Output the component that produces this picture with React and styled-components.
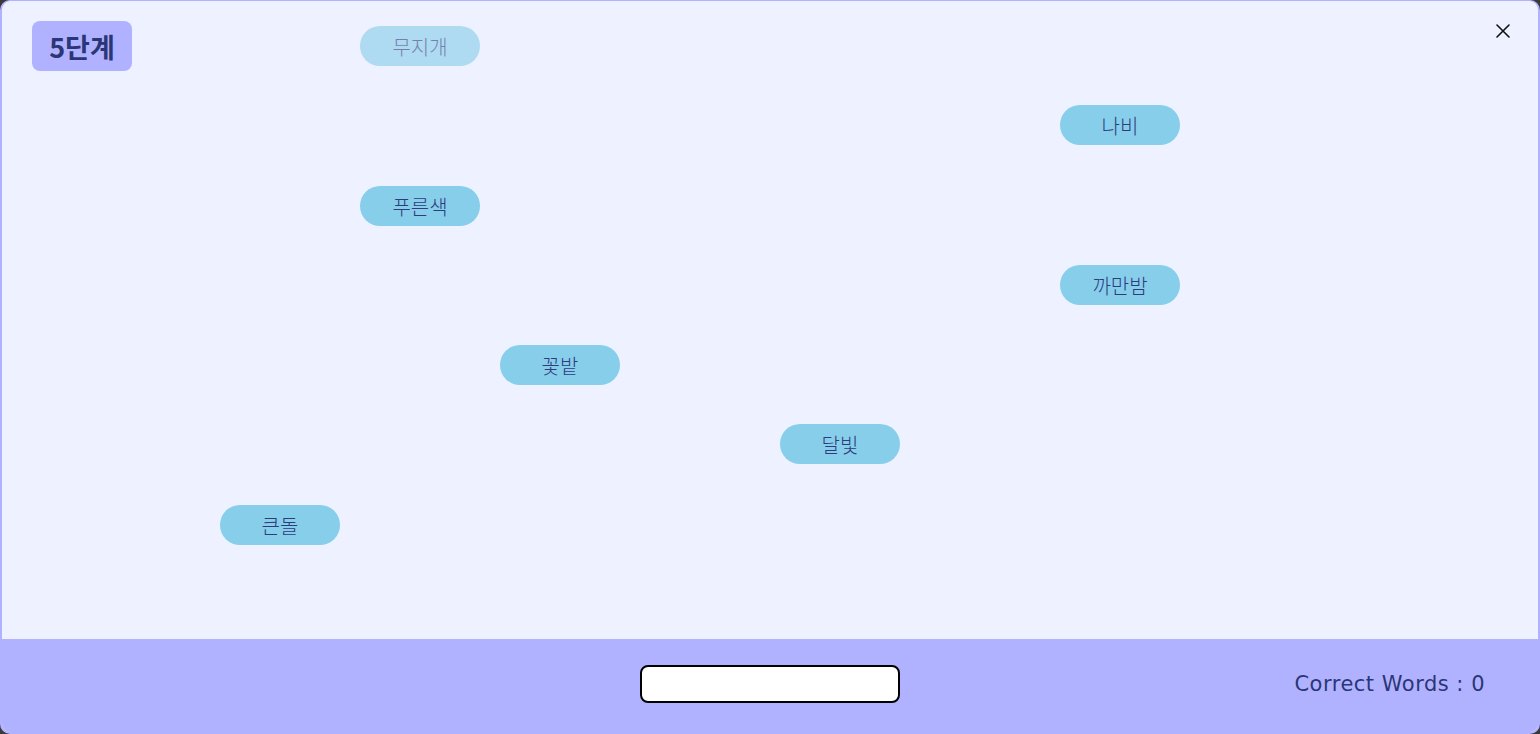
import React, { useState } from "react";
import styled, { createGlobalStyle } from "styled-components";

const words = [
  { text: "무지개", x: 358, y: 25, fading: true },
  { text: "나비", x: 1058, y: 104 },
  { text: "푸른색", x: 358, y: 185 },
  { text: "까만밤", x: 1058, y: 264 },
  { text: "꽃밭", x: 498, y: 344 },
  { text: "달빛", x: 778, y: 423 },
  { text: "큰돌", x: 218, y: 504 },
];

export default function App() {
  const [typed, setTyped] = useState("");
  const [correct] = useState(0);

  return (
    <>
      <GlobalStyle />
      <Modal>
        <Board>
          <Level>5단계</Level>
          <CloseButton type="button" aria-label="닫기">
            <svg width="14" height="14" viewBox="0 0 14 14">
              <path
                d="M1 1 L13 13 M13 1 L1 13"
                stroke="#111"
                strokeWidth="1.6"
                strokeLinecap="round"
              />
            </svg>
          </CloseButton>
          {words.map((word) => (
            <Word
              key={word.text}
              $fading={word.fading}
              style={{ left: word.x, top: word.y }}
            >
              {word.text}
            </Word>
          ))}
        </Board>
        <Footer>
          <Spacer />
          <TypeInput
            value={typed}
            onChange={(e) => setTyped(e.target.value)}
          />
          <Score>Correct Words : {correct}</Score>
        </Footer>
      </Modal>
    </>
  );
}

const GlobalStyle = createGlobalStyle`
  html, body {
    margin: 0;
    height: 100%;
    background: #3a3a3a;
  }
  #root {
    height: 100%;
  }
  * {
    box-sizing: border-box;
  }
`;

const Modal = styled.div`
  height: 734px;
  display: flex;
  flex-direction: column;
  background: #eef1ff;
  border: 2px solid #b1b2ff;
  border-top-width: 1px;
  border-radius: 10px;
  overflow: hidden;
`;

const Board = styled.div`
  position: relative;
  flex: 1;
  padding: 20px 30px;
`;

const Level = styled.div`
  display: inline-flex;
  align-items: center;
  justify-content: center;
  width: 100px;
  height: 50px;
  border-radius: 8px;
  background: #b1b2ff;
  color: #2b3677;
  font-family: "Noto Sans CJK KR", "Noto Sans", sans-serif;
  font-weight: 700;
  font-size: 27px;
`;

const CloseButton = styled.button`
  position: absolute;
  top: 22px;
  right: 27px;
  width: 16px;
  height: 16px;
  padding: 0;
  border: none;
  background: none;
  display: flex;
  align-items: center;
  justify-content: center;
  cursor: pointer;
`;

const Word = styled.div`
  position: absolute;
  width: 120px;
  height: 40px;
  border-radius: 20px;
  background: #87ceeb;
  opacity: ${(props) => (props.$fading ? 0.62 : 1)};
  display: flex;
  align-items: center;
  justify-content: center;
  color: #2e3c7c;
  font-family: "Noto Sans CJK KR", "Noto Sans", sans-serif;
  font-weight: 300;
  font-size: 20px;
`;

const Footer = styled.div`
  height: 93px;
  background: #b1b2ff;
  display: grid;
  grid-template-columns: 1fr 260px 1fr;
  align-items: center;
  padding: 0 53px 4px;
`;

const Spacer = styled.div``;

const TypeInput = styled.input`
  width: 260px;
  height: 38px;
  border: 2px solid #000;
  border-radius: 8px;
  background: #fff;
  padding: 0 10px;
  font-size: 16px;
  outline: none;
`;

const Score = styled.div`
  justify-self: end;
  color: #2b3677;
  font-family: "DejaVu Sans", "Noto Sans", sans-serif;
  font-size: 21px;
  letter-spacing: 0.5px;
`;
